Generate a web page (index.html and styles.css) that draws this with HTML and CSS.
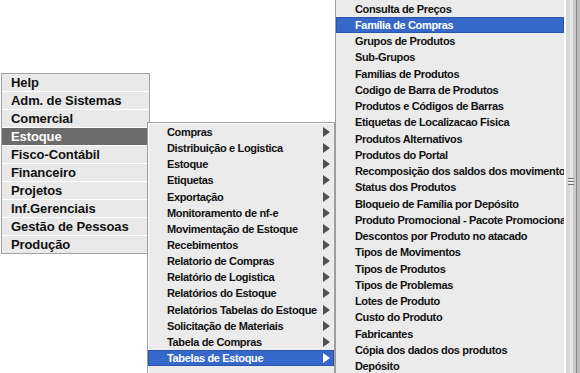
FILE: index.html
```html
<!DOCTYPE html>
<html lang="pt">
<head>
  <meta charset="UTF-8">
  <title>Menu</title>
  <link rel="stylesheet" href="styles.css">
</head>
<body>
  <div class="screen">

    <ul class="menu main">
      <li>Help</li>
      <li>Adm. de Sistemas</li>
      <li>Comercial</li>
      <li class="on">Estoque</li>
      <li>Fisco-Contábil</li>
      <li>Financeiro</li>
      <li>Projetos</li>
      <li>Inf.Gerenciais</li>
      <li>Gestão de Pessoas</li>
      <li>Produção</li>
    </ul>

    <ul class="menu sub">
      <li><span>Compras</span><i class="arrow"></i></li>
      <li><span>Distribuição e Logistica</span><i class="arrow"></i></li>
      <li><span>Estoque</span><i class="arrow"></i></li>
      <li><span>Etiquetas</span><i class="arrow"></i></li>
      <li><span>Exportação</span><i class="arrow"></i></li>
      <li><span>Monitoramento de nf-e</span><i class="arrow"></i></li>
      <li><span>Movimentação de Estoque</span><i class="arrow"></i></li>
      <li><span>Recebimentos</span><i class="arrow"></i></li>
      <li><span>Relatorio de Compras</span><i class="arrow"></i></li>
      <li><span>Relatório de Logistica</span><i class="arrow"></i></li>
      <li><span>Relatórios do Estoque</span><i class="arrow"></i></li>
      <li><span>Relatórios Tabelas do Estoque</span><i class="arrow"></i></li>
      <li><span>Solicitação de Materiais</span><i class="arrow"></i></li>
      <li><span>Tabela de Compras</span><i class="arrow"></i></li>
      <li class="on"><span>Tabelas de Estoque</span><i class="arrow"></i></li>
    </ul>

    <div class="popup">
      <ul class="menu leaf">
        <li>Consulta de Preços</li>
        <li class="on">Família de Compras</li>
        <li>Grupos de Produtos</li>
        <li>Sub-Grupos</li>
        <li>Famílias de Produtos</li>
        <li>Codigo de Barra de Produtos</li>
        <li>Produtos e Códigos de Barras</li>
        <li>Etiquetas de Localizacao Fisica</li>
        <li>Produtos Alternativos</li>
        <li>Produtos do Portal</li>
        <li>Recomposição dos saldos dos movimentos</li>
        <li>Status dos Produtos</li>
        <li>Bloqueio de Família por Depósito</li>
        <li>Produto Promocional - Pacote Promocional</li>
        <li>Descontos por Produto no atacado</li>
        <li>Tipos de Movimentos</li>
        <li>Tipos de Produtos</li>
        <li>Tipos de Problemas</li>
        <li>Lotes de Produto</li>
        <li>Custo do Produto</li>
        <li>Fabricantes</li>
        <li>Cópia dos dados dos produtos</li>
        <li>Depósito</li>
      </ul>
      <div class="scroll"><span class="grip"></span></div>
    </div>

  </div>
</body>
</html>
```

FILE: styles.css
```css
body{
  margin: 0;
  background: #fff;
  font-family: "Liberation Sans", Arial, sans-serif;
  font-weight: bold;
  color: #111;
}
.screen{
  position: relative;
  width: 580px;
  height: 373px;
  overflow: hidden;
}
.menu{
  list-style: none;
  margin: 0;
  padding: 0;
}
.menu .on{
  color: #fff;
}

/* first level */
.main{
  position: absolute;
  left: 1px;
  top: 73px;
  width: 147px;
  border: 1px solid #a3a3a3;
  background: #e9e9e9;
  font-size: 13px;
  letter-spacing: -0.1px;
}
.main li{
  height: 17px;
  line-height: 17px;
  padding-left: 9px;
  border-bottom: 1px solid #fff;
}
.main li:last-child{
  border-bottom: none;
}

/* second level */
.sub{
  position: absolute;
  left: 147px;
  top: 122px;
  width: 186px;
  padding: 1px 0 12px;
  border: 1px solid #9e9e9e;
  box-shadow: inset 1px 1px #fff;
  background: #ebebeb;
  font-size: 11px;
  letter-spacing: -0.35px;
}
.sub li{
  display: flex;
  align-items: center;
  justify-content: space-between;
  height: 16.15px;
  padding: 0 4px 0 19px;
}
.arrow{
  width: 0;
  height: 0;
  border-top: 5px solid transparent;
  border-bottom: 5px solid transparent;
  border-left: 7px solid #505050;
}
.sub .on .arrow{
  border-left-color: #fff;
}

/* third level, with its scrollbar */
.popup{
  position: absolute;
  left: 335px;
  top: 0;
  width: 245px;
  height: 373px;
  display: flex;
}
.leaf{
  width: 228px;
  padding-top: 0.5px;
  border-left: 1px solid #9e9e9e;
  background: #ebebeb;
  font-size: 11px;
  letter-spacing: -0.35px;
  white-space: nowrap;
  overflow: hidden;
}
.leaf li{
  height: 16.25px;
  line-height: 16.25px;
  padding-left: 19px;
}
.menu li.on{
  background: #3568c8;
  box-shadow: inset 0 0 0 1px #2a55a8;
}
.main li.on{
  background: #6c6c6c;
  box-shadow: none;
}
.scroll{
  position: relative;
  flex: 1;
  background: linear-gradient(to right, #fff 0 2px, #d9d9d9 2px 6px, #e6e6e6 6px 9px, #cacaca 9px 12px, #888 12px 13px, #bdbdbd 13px);
}
.grip{
  position: absolute;
  left: 4px;
  top: 178px;
  width: 6px;
  height: 7px;
  background: repeating-linear-gradient(#6f6f6f 0 1px, #f4f4f4 1px 2px, transparent 2px 3px);
}
```
